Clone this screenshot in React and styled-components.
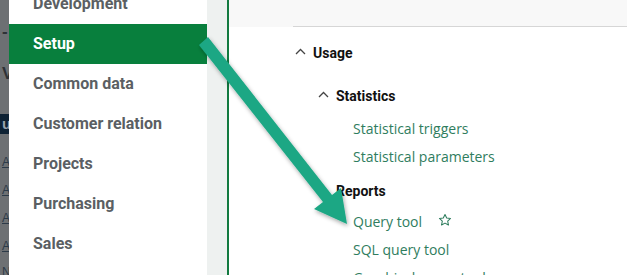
import React from "react";
import styled, { createGlobalStyle } from "styled-components";

const GlobalStyle = createGlobalStyle`
  html, body {
    margin: 0;
    padding: 0;
    background: #ffffff;
  }
  #root {
    width: 627px;
    height: 275px;
    overflow: hidden;
  }
`;

const menuItems = [
  "Development",
  "Setup",
  "Common data",
  "Customer relation",
  "Projects",
  "Purchasing",
  "Sales",
];

const backdropBits = [
  { text: "-", top: 22, dark: false },
  { text: "V", top: 64, dark: false },
  { text: "u", top: 114, dark: true },
  { text: "AE", top: 152, link: true },
  { text: "AE", top: 180, link: true },
  { text: "AE", top: 208, link: true },
  { text: "AC", top: 236, link: true },
  { text: "NA", top: 262, link: true },
];

export default function App() {
  return (
    <>
      <GlobalStyle />
      <Screen>
        <Backdrop>
          {backdropBits.map((b, i) => (
            <BackdropBit key={i} $dark={b.dark} $link={b.link} style={{ top: b.top }}>
              {b.text}
            </BackdropBit>
          ))}
        </Backdrop>

        <Menu>
          {menuItems.map((item) => (
            <MenuItem key={item} $active={item === "Setup"}>
              {item}
            </MenuItem>
          ))}
        </Menu>

        <Gutter />

        <Content>
          <TopBand>
            <Divider />
          </TopBand>

          <Tree>
            <Heading $level={0} $after={21}>
              <Chevron />
              Usage
            </Heading>

            <Heading $level={1} $after={7}>
              <Chevron />
              Statistics
            </Heading>
            <LinkRow>Statistical triggers</LinkRow>
            <LinkRow>Statistical parameters</LinkRow>

            <Heading $level={1} $before={10} $after={5}>
              <Chevron />
              Reports
            </Heading>
            <LinkRow>
              Query tool
              <StarIcon />
            </LinkRow>
            <LinkRow>SQL query tool</LinkRow>
            <LinkRow>Graphical query tool</LinkRow>
          </Tree>
        </Content>

        <Arrow />
      </Screen>
    </>
  );
}

function Chevron() {
  return (
    <ChevronSvg width="11" height="7" viewBox="0 0 11 7">
      <path d="M1 6 L5.5 1.5 L10 6" fill="none" stroke="#444" strokeWidth="1.3" />
    </ChevronSvg>
  );
}

function StarIcon() {
  return (
    <StarSvg width="14" height="14" viewBox="0 0 24 24">
      <path
        d="M12 2.5l2.9 6.1 6.6.8-4.9 4.6 1.3 6.6L12 17.3l-5.9 3.3 1.3-6.6-4.9-4.6 6.6-.8z"
        fill="none"
        stroke="#2f7d5e"
        strokeWidth="1.8"
        strokeLinejoin="round"
      />
    </StarSvg>
  );
}

function Arrow() {
  return (
    <ArrowSvg width="627" height="275" viewBox="0 0 627 275">
      <defs>
        <filter id="shadow" x="-20%" y="-20%" width="140%" height="140%">
          <feDropShadow dx="1" dy="2" stdDeviation="2" floodColor="#000" floodOpacity="0.35" />
        </filter>
      </defs>
      <g filter="url(#shadow)" fill="#1da784">
        <path d="M199 45 L208 37 L332 195 L341 188 L347 224 L314 209 L323 202 Z" />
      </g>
    </ArrowSvg>
  );
}

const Screen = styled.div`
  position: relative;
  display: flex;
  width: 627px;
  height: 275px;
  overflow: hidden;
  background: #ffffff;
`;

const Backdrop = styled.div`
  position: relative;
  width: 9px;
  flex-shrink: 0;
  background: #6d7073;
  overflow: hidden;
`;

const BackdropBit = styled.span`
  position: absolute;
  left: -2px;
  font-family: "Liberation Sans", Arial, sans-serif;
  font-size: ${(p) => (p.$dark ? "15px" : p.$link ? "12px" : "17px")};
  font-weight: ${(p) => (p.$link ? 400 : 700)};
  line-height: 20px;
  color: ${(p) => (p.$dark ? "#9aa4ad" : p.$link ? "#2c3a48" : "#2e3236")};
  text-decoration: ${(p) => (p.$link ? "underline" : "none")};
  padding: 0 3px 0 4px;
  background: ${(p) => (p.$dark ? "#0e2234" : "transparent")};
`;

const Menu = styled.nav`
  width: 198px;
  flex-shrink: 0;
  display: flex;
  flex-direction: column;
  margin-top: -16px;
  background: #ffffff;
`;

const MenuItem = styled.div`
  height: 40px;
  display: flex;
  align-items: center;
  padding-left: 24px;
  padding-bottom: 2px;
  box-sizing: border-box;
  font-family: Roboto, "Liberation Sans", sans-serif;
  font-size: 16px;
  font-weight: 700;
  color: ${(p) => (p.$active ? "#ffffff" : "#5b5f63")};
  background: ${(p) => (p.$active ? "#087f3d" : "transparent")};
`;

const Gutter = styled.div`
  width: 20px;
  flex-shrink: 0;
  background: #eef1f0;
  border-right: 2px solid #127a40;
`;

const Content = styled.main`
  flex: 1;
  display: flex;
  flex-direction: column;
  background: #ffffff;
`;

const TopBand = styled.div`
  height: 27px;
  flex-shrink: 0;
  background: #f8f8f8;
  display: flex;
  align-items: flex-end;
  padding-left: 64px;
`;

const Divider = styled.div`
  flex: 1;
  height: 1px;
  background: #d6d6d6;
`;

const Tree = styled.div`
  display: flex;
  flex-direction: column;
  padding-top: 15px;
  padding-left: 66px;
`;

const Heading = styled.div`
  display: flex;
  align-items: center;
  gap: 7px;
  height: 22px;
  margin-left: ${(p) => p.$level * 23}px;
  margin-top: ${(p) => p.$before || 0}px;
  margin-bottom: ${(p) => p.$after || 0}px;
  font-family: Roboto, "Liberation Sans", sans-serif;
  font-size: 14px;
  font-weight: 700;
  color: #111111;
`;

const ChevronSvg = styled.svg`
  flex-shrink: 0;
  margin-bottom: 3px;
`;

const LinkRow = styled.div`
  display: flex;
  align-items: center;
  height: 28px;
  margin-left: 58px;
  font-family: "Open Sans", "Liberation Sans", sans-serif;
  font-size: 14px;
  color: #2f7d5e;
  white-space: nowrap;
`;

const StarSvg = styled.svg`
  margin-left: 16px;
  margin-bottom: 2px;
`;

const ArrowSvg = styled.svg`
  position: absolute;
  left: 0;
  top: 0;
  pointer-events: none;
`;
